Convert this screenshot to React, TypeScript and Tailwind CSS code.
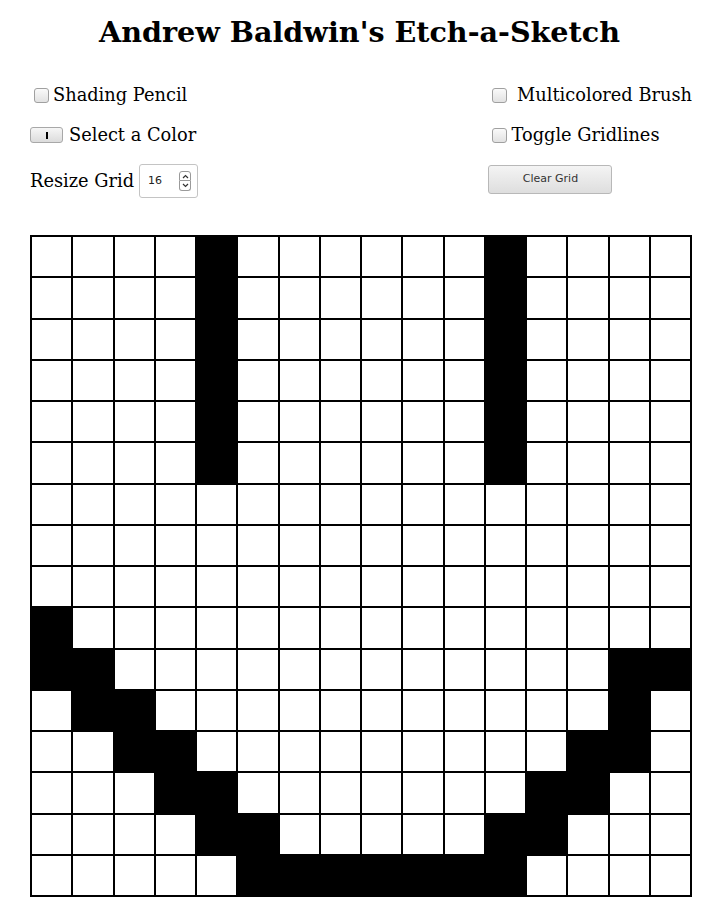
import { useState } from 'react';

const SIZE = 16;

// cells painted black in the reference sketch, by row
const painted: Record<number, number[]> = {
  0: [4, 11],
  1: [4, 11],
  2: [4, 11],
  3: [4, 11],
  4: [4, 11],
  5: [4, 11],
  9: [0],
  10: [0, 1, 14, 15],
  11: [1, 2, 14],
  12: [2, 3, 13, 14],
  13: [3, 4, 12, 13],
  14: [4, 5, 11, 12],
  15: [5, 6, 7, 8, 9, 10, 11],
};

const Checkbox = () => (
  <span className="inline-block w-[15px] h-[15px] rounded-[3px] border border-[#a0a0a0] bg-gradient-to-b from-[#fafafa] to-[#e2e2e2] ml-[4px] mr-[4px] shrink-0" />
);

function App() {
  const [cells] = useState(() =>
    Array.from({ length: SIZE * SIZE }, (_, i) => {
      const r = Math.floor(i / SIZE);
      const c = i % SIZE;
      return (painted[r] || []).includes(c);
    })
  );

  return (
    <div className="min-h-[906px] bg-white text-black font-['DejaVu_Serif',serif]">
      <h1 className="pt-[15px] text-center text-[28.6px] leading-[34px] font-bold">
        Andrew Baldwin's Etch-a-Sketch
      </h1>

      <div className="ml-[30px] w-[662px] mt-[32px] flex justify-between">
        {/* left column */}
        <div className="flex flex-col">
          <div className="h-[28px] flex items-center text-[17.8px]">
            <Checkbox />
            <span>Shading Pencil</span>
          </div>
          <div className="mt-[12px] h-[28px] flex items-center text-[17.8px]">
            <span className="w-[33px] h-[16px] rounded-[3px] border border-[#a8a8a8] bg-gradient-to-b from-[#f6f6f6] to-[#dcdcdc] flex items-center justify-center mr-[6px]">
              <span className="w-[2px] h-[7px] bg-black" />
            </span>
            <span>Select a Color</span>
          </div>
          <div className="mt-[15px] h-[34px] flex items-center text-[17.8px]">
            <span className="mr-[5px]">Resize Grid</span>
            <span className="w-[59px] h-[34px] rounded-[3px] border border-[#c4c4c4] bg-white flex items-center pl-[8px] pr-[6px]">
              <span className="flex-1 text-[11px] font-['DejaVu_Sans',sans-serif] text-[#222]">16</span>
              <span className="flex flex-col">
                <span className="w-[12px] h-[10px] border border-[#9a9a9a] rounded-t-[3px] flex items-center justify-center">
                  <svg width="7" height="5" viewBox="0 0 7 5"><path d="M1 4 L3.5 1.5 L6 4" fill="none" stroke="#333" strokeWidth="1.2" /></svg>
                </span>
                <span className="w-[12px] h-[10px] border border-t-0 border-[#9a9a9a] rounded-b-[3px] flex items-center justify-center">
                  <svg width="7" height="5" viewBox="0 0 7 5"><path d="M1 1 L3.5 3.5 L6 1" fill="none" stroke="#333" strokeWidth="1.2" /></svg>
                </span>
              </span>
            </span>
          </div>
        </div>

        {/* right column */}
        <div className="flex flex-col whitespace-nowrap">
          <div className="h-[28px] flex items-center text-[17.8px]">
            <Checkbox />
            <span>&nbsp;Multicolored Brush</span>
          </div>
          <div className="mt-[12px] h-[28px] flex items-center text-[17.8px]">
            <Checkbox />
            <span>Toggle Gridlines</span>
          </div>
          <div className="mt-[16px]">
            <button className="w-[124px] h-[29px] rounded-[3px] border border-[#b8b8b8] bg-gradient-to-b from-[#f4f4f4] to-[#dedede] text-[11px] text-[#333] font-['DejaVu_Sans',sans-serif]">
              Clear Grid
            </button>
          </div>
        </div>
      </div>

      <div className="ml-[30px] mt-[37px] w-[662px] h-[662px] bg-black p-[2px] gap-[2px] grid grid-cols-[repeat(16,minmax(0,1fr))] grid-rows-[repeat(16,minmax(0,1fr))]">
        {cells.map((on, i) => (
          <div key={i} className={on ? 'bg-black' : 'bg-white'} />
        ))}
      </div>
    </div>
  );
}

export default App;
